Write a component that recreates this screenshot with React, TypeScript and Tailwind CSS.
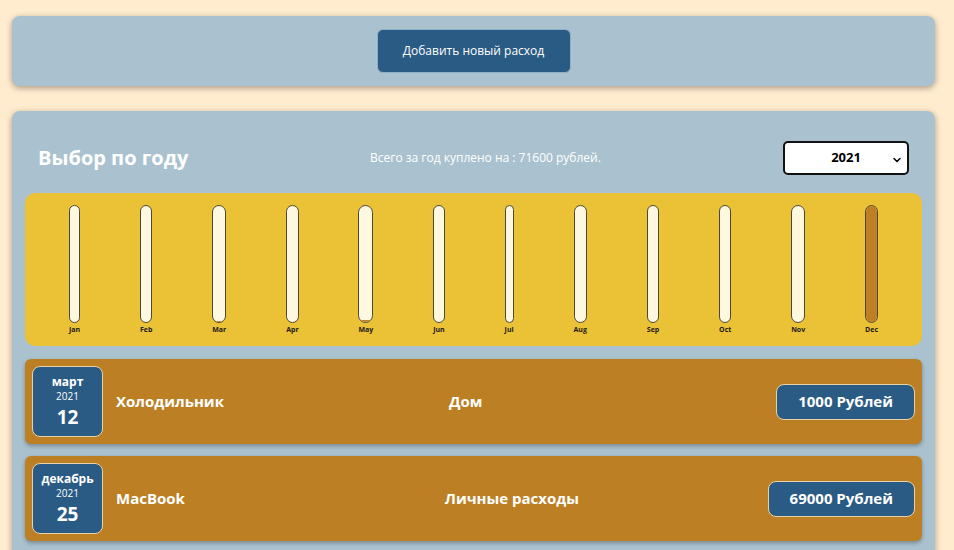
import { ChevronDown } from "lucide-react";

const months = [
  { label: "Jan", value: 0 },
  { label: "Feb", value: 0 },
  { label: "Mar", value: 1000 },
  { label: "Apr", value: 0 },
  { label: "May", value: 1600 },
  { label: "Jun", value: 0 },
  { label: "Jul", value: 0 },
  { label: "Aug", value: 0 },
  { label: "Sep", value: 0 },
  { label: "Oct", value: 0 },
  { label: "Nov", value: 0 },
  { label: "Dec", value: 69000 },
];

const expenses = [
  { month: "март", year: "2021", day: "12", title: "Холодильник", category: "Дом", price: "1000 Рублей" },
  { month: "декабрь", year: "2021", day: "25", title: "MacBook", category: "Личные расходы", price: "69000 Рублей" },
];

function ChartBar({ label, value, max }: { label: string; value: number; max: number }) {
  const fill = max > 0 ? Math.round((value / max) * 100) : 0;
  return (
    <div className="flex h-full flex-col items-center">
      <div className="flex w-full flex-1 flex-col justify-end overflow-hidden rounded-xl border border-[#4a4a3a] bg-[#fff8e0]">
        <div className="w-full bg-[#be7f25]" style={{ height: `${fill}%` }}></div>
      </div>
      <div className="mt-[2px] text-[7px] font-bold leading-[10px] text-[#1a1a1a]">{label}</div>
    </div>
  );
}

export default function App() {
  const max = Math.max(...months.map((m) => m.value));

  return (
    <div className="min-h-[550px] bg-[#ffebcd] pt-4 pl-3 pr-[19px] font-['Open_Sans',sans-serif]">
      {/* add expense */}
      <div className="flex h-[70px] items-center justify-center rounded-lg bg-[#aac2cf] shadow-[0_2px_6px_rgba(0,0,0,0.35)]">
        <button className="h-[44px] w-[194px] rounded-md border border-[#8fb0c6] bg-[#2a5b84] text-[12px] text-white">
          Добавить новый расход
        </button>
      </div>

      {/* expenses panel */}
      <div className="mt-[25px] rounded-lg bg-[#aac2cf] px-[13px] pt-[30px] pb-4 shadow-[0_2px_6px_rgba(0,0,0,0.35)]">
        <div className="flex h-[34px] items-center pl-[13px] pr-[13px]">
          <h2 className="w-[332px] text-[20px] font-bold text-white">Выбор по году</h2>
          <div className="flex-1 text-[12px] text-white">Всего за год куплено на : 71600 рублей.</div>
          <div className="relative flex h-[34px] w-[126px] items-center justify-center rounded-[5px] border-2 border-[#111] bg-white">
            <span className="text-[13px] font-bold text-black">2021</span>
            <ChevronDown className="absolute right-[4px] top-[11px] h-3 w-3 text-black" strokeWidth={3} />
          </div>
        </div>

        <div className="mt-[18px] flex h-[153px] justify-around rounded-[10px] bg-[#ebc136] px-[14px] pt-[12px] pb-[11px]">
          {months.map((m) => (
            <ChartBar key={m.label} label={m.label} value={m.value} max={max} />
          ))}
        </div>

        <div className="mt-[13px] flex flex-col gap-[12px]">
          {expenses.map((e) => (
            <div
              key={e.title}
              className="flex h-[85px] items-center rounded-md bg-[#bd7f23] px-[7px] shadow-[0_2px_4px_rgba(0,0,0,0.3)]"
            >
              <div className="flex h-[71px] w-[71px] flex-col items-center justify-center rounded-lg border border-[#e8d3a8] bg-[#2a5b84] text-white">
                <div className="text-[12px] font-bold leading-[15px]">{e.month}</div>
                <div className="text-[10px] leading-[14px]">{e.year}</div>
                <div className="mt-[1px] text-[19px] font-bold leading-[26px]">{e.day}</div>
              </div>
              <div className="ml-[13px] flex flex-1 items-center">
                <div className="flex-1 text-[15px] font-bold text-white">{e.title}</div>
                <div className="flex-1 pl-[6px] text-[15px] font-bold text-white">{e.category}</div>
              </div>
              <div className="flex h-[36px] items-center rounded-lg border border-[#e8d3a8] bg-[#2a5b84] px-[21px] text-[15px] font-bold text-white">
                {e.price}
              </div>
            </div>
          ))}
        </div>
      </div>
    </div>
  );
}
